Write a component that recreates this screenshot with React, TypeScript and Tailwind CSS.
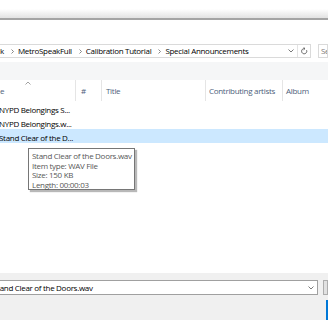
const Chev = () => (
  <svg width="3" height="5" viewBox="0 0 3 5" className="ml-[7px] mr-[4px] shrink-0">
    <path d="M0.5 0.5 L2.5 2.5 L0.5 4.5" fill="none" stroke="#6b6b6b" strokeWidth="0.8" />
  </svg>
);

const ChevDown = ({ className = "" }: { className?: string }) => (
  <svg width="6" height="4" viewBox="0 0 6 4" className={className}>
    <path d="M0.5 0.5 L3 3 L5.5 0.5" fill="none" stroke="#6b6b6b" strokeWidth="0.9" />
  </svg>
);

const rows = [
  { name: "NYPD Belongings S...", selected: false },
  { name: "NYPD Belongings.w...", selected: false },
  { name: "Stand Clear of the D...", selected: true },
];

export default function App() {
  return (
    <div className="relative w-[328px] h-[320px] overflow-hidden bg-white flex flex-col font-['Open_Sans',sans-serif] text-[8px] tracking-[-0.3px]">
      {/* window chrome strip */}
      <div className="h-[18px] shrink-0 bg-linear-to-b from-white from-50% to-[#e2e2e2]" />
      <div className="h-[2px] shrink-0 bg-[#a4a4a4]" />

      {/* address bar */}
      <div className="mt-[24px] h-[14px] shrink-0 flex">
        <div className="-ml-px w-[312px] shrink-0 border border-[#dadada] flex items-center">
          <div className="flex-1 min-w-0 flex items-center text-black whitespace-nowrap overflow-hidden">
            <span>k</span>
            <Chev />
            <span>MetroSpeakFull</span>
            <Chev />
            <span>Calibration Tutorial</span>
            <Chev />
            <span>Special Announcements</span>
          </div>
          <ChevDown className="mr-[3px] shrink-0" />
          <div className="h-full shrink-0 border-l border-[#e3e3e3] w-[13px] flex items-center justify-center">
            <svg width="7" height="8" viewBox="0 0 7 8">
              <path d="M5.6 3.2 A2.6 2.6 0 1 1 3.5 1.6" fill="none" stroke="#555" strokeWidth="0.9" />
              <path d="M2.6 0.4 L4 1.6 L2.6 2.8" fill="none" stroke="#555" strokeWidth="0.9" />
            </svg>
          </div>
        </div>
        <div className="ml-[7px] flex-1 min-w-0 overflow-hidden border border-[#dadada] flex items-center pl-[2px] text-[#7a7a7a] whitespace-nowrap">
          Search
        </div>
      </div>

      {/* toolbar strip */}
      <div className="mt-[4px] h-[18px] shrink-0 bg-[#f5f6f7]" />

      {/* list header */}
      <div className="relative h-[21px] shrink-0 flex text-[#4c607a] whitespace-nowrap">
        <div className="w-[76px] flex items-center border-r border-[#e5e5e5] overflow-hidden">
          <span className="-ml-[17px]">Name</span>
        </div>
        <div className="w-[26px] flex items-center pl-[5px] border-r border-[#e5e5e5]">#</div>
        <div className="w-[104px] flex items-center pl-[4px] border-r border-[#e5e5e5]">Title</div>
        <div className="w-[77px] flex items-center pl-[3px] border-r border-[#e5e5e5]">Contributing artists</div>
        <div className="flex-1 flex items-center pl-[3px]">Album</div>
        <svg width="6" height="4" viewBox="0 0 6 4" className="absolute left-[25px] top-[1px]">
          <path d="M0.5 3.5 L3 1 L5.5 3.5" fill="none" stroke="#8a8a8a" strokeWidth="0.8" />
        </svg>
      </div>

      {/* rows */}
      <div className="flex flex-col">
        {rows.map((r) => (
          <div
            key={r.name}
            className={`h-[14px] flex items-center pt-[3px] whitespace-nowrap text-black ${r.selected ? "bg-[#cce8ff]" : ""}`}
          >
            <span className="-ml-[1px]">{r.name}</span>
          </div>
        ))}
      </div>

      {/* tooltip */}
      <div className="absolute left-[28px] top-[148px] w-[107px] h-[42px] border border-[#767676] bg-white shadow-[2px_2px_1px_rgba(0,0,0,0.28)] pl-[3px] pt-[2px] leading-[9.7px] text-[#575757] whitespace-nowrap">
        <div>Stand Clear of the Doors.wav</div>
        <div>Item type: WAV File</div>
        <div>Size: 150 KB</div>
        <div>Length: 00:00:03</div>
      </div>

      {/* bottom bar */}
      <div className="mt-auto h-[47px] shrink-0 bg-[#f0f0f0] flex flex-col pt-[7px]">
        <div className="h-[15px] flex">
          <div className="-ml-px w-[319px] shrink-0 border border-[#a0a0a0] bg-white flex items-center overflow-hidden">
            <span className="flex-1 -ml-[7px] whitespace-nowrap text-black">Stand Clear of the Doors.wav</span>
            <ChevDown className="mr-[3px] shrink-0" />
          </div>
          <div className="ml-[5px] flex-1 border border-[#adadad] bg-[#e1e1e1]" />
        </div>
        <div className="mt-[5px] ml-[326px] flex-1 border border-[#0078d7] bg-[#e1e1e1]" />
      </div>
    </div>
  );
}
